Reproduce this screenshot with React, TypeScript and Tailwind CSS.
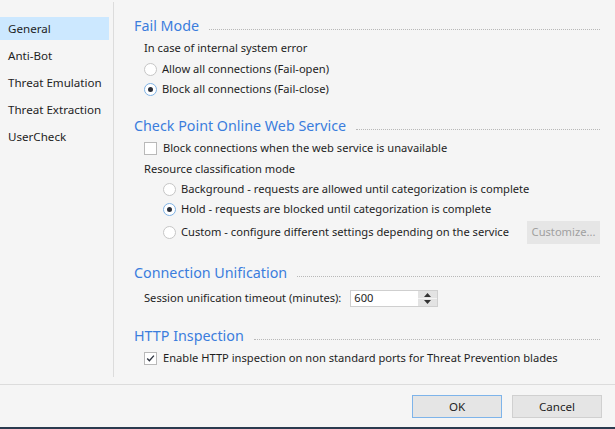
import React from 'react';

const font = { fontFamily: '"Noto Sans", "Open Sans", sans-serif' };

// --- small controls ---
const Radio = ({ checked }: { checked?: boolean }) => (
    <span
        className={`w-[13px] h-[13px] rounded-full border bg-white flex items-center justify-center shrink-0 ${checked ? 'border-[#7fb2e5]' : 'border-[#c6c6c6]'}`}
    >
        {checked && <span className="w-[5px] h-[5px] rounded-full bg-[#2a2f3a]" />}
    </span>
);

const Checkbox = ({ checked }: { checked?: boolean }) => (
    <span className="w-[13px] h-[13px] border border-[#b9b9b9] bg-white flex items-center justify-center shrink-0">
        {checked && (
            <svg width="9" height="9" viewBox="0 0 9 9">
                <path d="M1.2 4.6 L3.4 6.8 L7.9 1.6" fill="none" stroke="#2f3440" strokeWidth="1.4" />
            </svg>
        )}
    </span>
);

const Heading = ({ title }: { title: string }) => (
    <div className="h-[20px] flex items-center">
        <span className="text-[14.3px] text-[#3b7ddd] leading-[20px] whitespace-nowrap">{title}</span>
        <span className="flex-1 ml-[10px] mt-[6px] border-t border-dotted border-[#b8b8b8]" />
    </div>
);

const Option = ({ checked, label, indent }: { checked?: boolean; label: string; indent?: boolean }) => (
    <div className={`h-[20px] flex items-center gap-[5px] ${indent ? 'pl-[29px]' : 'pl-[10px]'}`}>
        <Radio checked={checked} />
        <span className="whitespace-nowrap">{label}</span>
    </div>
);

const sideItems = ['General', 'Anti-Bot', 'Threat Emulation', 'Threat Extraction', 'UserCheck'];

export default function App() {
    return (
        <div className="w-[615px] h-[429px] bg-[#f5f5f5] flex flex-col text-[11.15px] text-[#1e1e1e] overflow-hidden" style={font}>
            <div className="flex flex-1 min-h-0">
                {/* sidebar */}
                <div className="w-[114px] mt-[2px] mb-[7px] border-r border-[#dcdcdc] pt-[15px] shrink-0 text-[11.6px]">
                    {sideItems.map((item, idx) => (
                        <div
                            key={item}
                            className={`h-[23px] mb-[4px] mr-[4px] pl-[8px] flex items-center ${idx === 0 ? 'bg-[#cce8ff]' : ''}`}
                        >
                            {item}
                        </div>
                    ))}
                </div>

                {/* content */}
                <div className="flex-1 pl-[20px] pr-[15px] pt-[16px] flex flex-col">
                    <Heading title="Fail Mode" />
                    <div className="h-[20px] mt-[2px] pl-[10px] flex items-center">In case of internal system error</div>
                    <div className="mt-[1px]">
                        <Option label="Allow all connections (Fail-open)" />
                    </div>
                    <Option checked label="Block all connections (Fail-close)" />

                    <div className="mt-[17px]">
                        <Heading title="Check Point Online Web Service" />
                    </div>
                    <div className="h-[20px] mt-[2px] pl-[10px] flex items-center gap-[6px]">
                        <Checkbox />
                        <span>Block connections when the web service is unavailable</span>
                    </div>
                    <div className="h-[20px] mt-[1px] pl-[10px] flex items-center">Resource classification mode</div>
                    <Option indent label="Background - requests are allowed until categorization is complete" />
                    <Option indent checked label="Hold - requests are blocked until categorization is complete" />
                    <div className="h-[25px] mt-[1px] pl-[29px] flex items-center gap-[5px]">
                        <Radio />
                        <span className="whitespace-nowrap">Custom - configure different settings depending on the service</span>
                        <span className="ml-auto w-[73px] h-[23px] bg-[#e6e6e6] text-[#a0a0a0] flex items-center justify-center shrink-0">
                            Customize...
                        </span>
                    </div>

                    <div className="mt-[18px]">
                        <Heading title="Connection Unification" />
                    </div>
                    <div className="h-[20px] mt-[5px] pl-[10px] flex items-center gap-[9px]">
                        <span>Session unification timeout (minutes):</span>
                        <div className="w-[88px] h-[17px] border border-[#cfcfcf] bg-white flex">
                            <span className="flex-1 pl-[3px] flex items-center leading-none">600</span>
                            <div className="w-[19px] bg-[#e3e3e3] flex flex-col items-center justify-center gap-[1px]">
                                <svg width="7" height="4" viewBox="0 0 7 4"><path d="M0 4 L3.5 0 L7 4 Z" fill="#333" /></svg>
                                <span className="w-full h-px bg-[#f4f4f4]" />
                                <svg width="7" height="4" viewBox="0 0 7 4"><path d="M0 0 L3.5 4 L7 0 Z" fill="#333" /></svg>
                            </div>
                        </div>
                    </div>

                    <div className="mt-[18px]">
                        <Heading title="HTTP Inspection" />
                    </div>
                    <div className="h-[20px] mt-[2px] pl-[10px] flex items-center gap-[6px]">
                        <Checkbox checked />
                        <span>Enable HTTP inspection on non standard ports for Threat Prevention blades</span>
                    </div>
                </div>
            </div>

            {/* footer */}
            <div className="h-[43px] border-t border-[#dcdcdc] flex items-start justify-end gap-[10px] pt-[10px] pr-[13px] shrink-0 text-[11.6px]">
                <button className="w-[90px] h-[23px] bg-[#e5e5e5] border border-[#7eb4ea] flex items-center justify-center">OK</button>
                <button className="w-[90px] h-[23px] bg-[#e5e5e5] border border-[#d0d0d0] flex items-center justify-center">Cancel</button>
            </div>
            <div className="h-[2px] bg-[#2b3b4f] shrink-0" />
        </div>
    );
}
